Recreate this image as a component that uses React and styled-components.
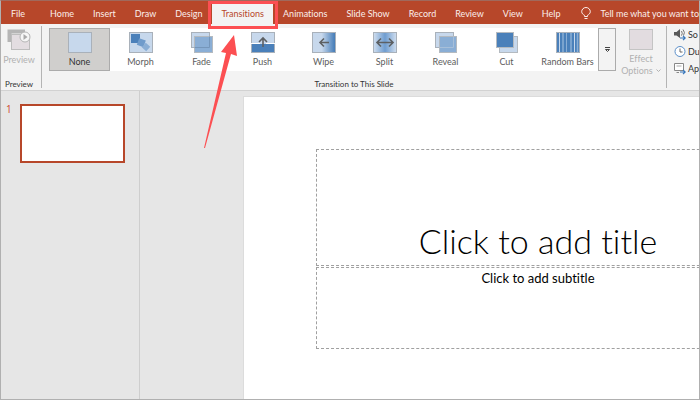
import React, { useState } from 'react'
import styled, { createGlobalStyle, css } from 'styled-components';

const GlobalStyle = createGlobalStyle`
    * {
        box-sizing: border-box;
    }
    body {
        margin: 0;
        font-family: Lato, 'Open Sans', sans-serif;
        font-variant-ligatures: none;
        color: #444;
    }
    button, input {
        font: inherit;
        font-variant-ligatures: none;
        color: inherit;
        border: 0;
        margin: 0;
        padding: 0;
        background: none;
    }
    svg {
        display: block;
        flex: none;
    }
`;

const Window = styled.div`
    height: 100vh;
    display: flex;
    flex-direction: column;
    overflow: hidden;
    background: #e6e6e6;
    border: 1px solid #b0b0b0;
    border-top-color: #a0695c;
`;

const TabBar = styled.nav`
    display: flex;
    flex: none;
    height: 23px;
    padding-top: 3px;
    background: #b7472a;
    color: #fbeeea;
    font-size: 9px;
`;

const Tab = styled.button`
    position: relative;
    flex: none;
    padding: 0 9px 2px 10px;
    white-space: nowrap;
    ${({ $wide }) => $wide && css`
        margin-right: 6px;
    `}
    ${({ $active }) => $active && css`
        background: #f3f3f3;
        color: #b7472a;
    `}
`;

const TellMe = styled.label`
    display: flex;
    flex: 1;
    min-width: 0;
    align-items: center;
    gap: 9px;
    padding: 0 0 2px 12px;
`;

const TellMeInput = styled.input`
    flex: 1;
    min-width: 0;
    outline: none;
    &::placeholder {
        color: #fbeeea;
        opacity: 1;
    }
`;

const Highlight = styled.span`
    position: absolute;
    inset: -3px -5px -5px -4px;
    border: 3px solid #fc4f52;
    z-index: 2;
`;

const Arrow = styled.svg`
    position: absolute;
    top: 30px;
    left: -9px;
    z-index: 2;
    fill: #fc4f52;
    pointer-events: none;
`;

const Ribbon = styled.div`
    display: flex;
    flex: none;
    height: 67px;
    background: #f3f3f3;
    border-bottom: 1px solid #d2d2d2;
    overflow: hidden;
    font-size: 9px;
`;

const Group = styled.section`
    display: flex;
    flex: none;
    flex-direction: column;
    justify-content: space-between;
    padding-top: 4px;
`;

const PreviewGroup = styled(Group)`
    padding-right: 4px;
`;

const GroupRow = styled.div`
    display: flex;
`;

const GroupName = styled.div`
    font-size: 8px;
    line-height: 12px;
    text-align: center;
    color: #333;
`;

const Divider = styled.div`
    flex: none;
    width: 1px;
    margin: 2px 0;
    background: #b4b4b4;
`;

const BigButton = styled.button`
    display: flex;
    flex-direction: column;
    align-items: center;
    width: ${({ $width }) => $width}px;
    line-height: 12px;
    white-space: nowrap;
    color: #b1b1b1;
    > svg {
        margin: 1px 0 3px;
    }
`;

const Chevron = styled.span`
    display: flex;
    align-items: center;
    gap: 3px;
`;

const Gallery = styled.div`
    display: flex;
    height: 43px;
    margin-left: 7px;
    background: #fff;
`;

const Effect = styled.button`
    display: flex;
    flex-direction: column;
    align-items: center;
    gap: 3px;
    width: 61px;
    padding-top: 4px;
    line-height: 12px;
    color: #5c5c5c;
    white-space: nowrap;
    ${({ $selected }) => $selected && css`
        background: #d0cfcd;
        color: #333;
        box-shadow: inset 0 0 0 1px #ababab;
    `}
`;

const More = styled.button`
    display: flex;
    align-items: center;
    justify-content: center;
    width: 18px;
    background: #f3f3f3;
    border: 1px solid #ababab;
`;

const Timing = styled.div`
    display: flex;
    flex: 1;
    flex-direction: column;
    gap: 2px;
    min-width: 0;
    padding: 3px 0 0 7px;
`;

const TimingItem = styled.button`
    display: flex;
    align-items: center;
    gap: 2px;
    height: 15px;
    white-space: nowrap;
    color: #333;
`;

const Main = styled.div`
    display: flex;
    flex: 1;
    min-height: 0;
`;

const Thumbnails = styled.aside`
    display: flex;
    align-items: flex-start;
    flex: none;
    width: 139px;
    padding: 13px 14px 0 5px;
    gap: 8px;
    border-right: 1px solid #cecece;
`;

const SlideNumber = styled.span`
    width: 6px;
    font-family: 'Open Sans', sans-serif;
    font-size: 10px;
    line-height: 10px;
    color: #d0482c;
`;

const Thumb = styled.button`
    width: 106px;
    aspect-ratio: 16 / 9;
    background: #fff;
    border: 2px solid #b7472a;
`;

const Workspace = styled.main`
    flex: 1;
    min-width: 0;
    padding: 6px 0 0 104px;
    overflow: hidden;
`;

const Slide = styled.div`
    display: flex;
    flex-direction: column;
    gap: 1px;
    width: 588px;
    aspect-ratio: 16 / 9;
    padding: 52px 72px;
    background: #fff;
    outline: 1px solid #dcdcdc;
    color: #000;
    text-align: center;
`;

const TitleBox = styled.div`
    display: flex;
    align-items: flex-end;
    justify-content: center;
    height: 117px;
    border: 1px dashed #a0a0a0;
`;

const SubtitleBox = styled(TitleBox)`
    align-items: flex-start;
    height: 82px;
`;

const Title = styled.h1`
    margin: 0 0 4px;
    font-size: 34px;
    font-weight: 300;
    line-height: 40px;
`;

const Subtitle = styled.p`
    margin: 2px 0 0;
    font-size: 13px;
    line-height: 16px;
`;

const light = '#c7d8ec'
const mid = '#8aaed5'
const dark = '#4a80ba'

const Frame = ({ fill = light }) => (
    <rect x="0.5" y="0.5" width="23" height="20" fill={fill} stroke="#a9b1ba" />
)

const gradient = (id, stops) => (
    <linearGradient id={id}>
        {stops.map(([offset, color]) => <stop key={offset} offset={offset} stopColor={color} />)}
    </linearGradient>
)

const drawings = {
    None: <Frame />,
    Morph: (
        <>
            <Frame />
            <rect x="2" y="2" width="9" height="9" fill={dark} />
            <rect x="9" y="7" width="7" height="7" fill="#6f9bcb" transform="rotate(20 12 10)" />
            <rect x="14" y="12" width="6" height="6" fill={mid} transform="rotate(42 17 15)" />
        </>
    ),
    Fade: (
        <>
            <rect x="1.5" y="0.5" width="18" height="15" fill={light} stroke="#a9b1ba" />
            <rect x="4.5" y="4.5" width="18" height="16" fill={mid} stroke="#b4bac0" />
            <path d="M4.5 15.5h15v-11" fill="none" stroke="#7596ba" />
        </>
    ),
    Push: (
        <>
            <Frame />
            <path d="M1 12h22v8H1z" fill={dark} />
            <path d="M0 11.5h9M15 11.5h9" stroke="#fff" />
            <path d="M12 15V6M8 10l4-4 4 4" fill="none" stroke="#5d6063" strokeWidth="1.6" />
        </>
    ),
    Wipe: (
        <>
            <defs>{gradient('wipe', [[0.4, light], [0.95, dark]])}</defs>
            <Frame fill="url(#wipe)" />
            <path d="M17 10.5H8M12 6.5l-4 4 4 4" fill="none" stroke="#5d6063" strokeWidth="1.6" />
        </>
    ),
    Split: (
        <>
            <defs>{gradient('split', [[0.05, light], [0.5, '#6f9dd0'], [0.95, light]])}</defs>
            <Frame fill="url(#split)" />
            <path d="M4 10.5h16M8 6.5l-4 4 4 4M16 6.5l4 4-4 4" fill="none" stroke="#5d6063" strokeWidth="1.6" />
        </>
    ),
    Reveal: (
        <>
            <rect x="1.5" y="0.5" width="18" height="15" fill={light} stroke="#a9b1ba" />
            <rect x="5.5" y="4.5" width="17" height="16" fill={mid} stroke="#b4bac0" />
            <path d="M5.5 15.5h14v-11" fill="none" stroke="#a7bfd9" />
        </>
    ),
    Cut: (
        <>
            <rect x="4.5" y="4.5" width="18" height="16" fill={light} stroke="#b4bac0" />
            <rect x="1.5" y="0.5" width="17" height="15" fill={dark} stroke="#b4bac0" />
        </>
    ),
    'Random Bars': (
        <>
            <Frame fill={dark} />
            <path d="M3.5 1v19M18.5 1v19" stroke={light} />
            <path d="M7 1v19M15 1v19M21.5 1v19" stroke={mid} strokeWidth="1.5" />
            <path d="M10.5 1v19" stroke={mid} />
        </>
    ),
}

const PreviewIcon = () => (
    <svg width="24" height="22" viewBox="0 0 24 22">
        <path d="M2.5 13V2.5H18" fill="none" stroke="#b5b5b5" strokeWidth="4" />
        <rect x="4.5" y="5.5" width="18" height="15" fill="#e3dde1" stroke="#bdbdbd" />
        <circle cx="18" cy="8" r="5" fill="#f6f6f6" stroke="#b5b5b5" />
        <path d="M16.5 5v6l4-3z" fill="#a9a9a9" />
    </svg>
)

const OptionsIcon = () => (
    <svg width="24" height="21" viewBox="0 0 24 21">
        <rect x="0.5" y="0.5" width="23" height="20" fill="#e2dce0" stroke="#c4c4c4" />
    </svg>
)

const BulbIcon = () => (
    <svg width="10" height="13" viewBox="0 0 10 13" fill="none" stroke="currentColor">
        <path d="M3.5 9.5V8.3C2 7.5 0.7 6.4 0.7 4.7a4.3 4.2 0 0 1 8.6 0C9.3 6.4 8 7.5 6.5 8.3v1.2zM3.5 11.5h3" />
    </svg>
)

const BlueArrow = () => (
    <path d="M6 10h5M9 7.8l2.2 2.2L9 12.2" fill="none" stroke="#3474ba" strokeWidth="1.2" />
)

const SoundIcon = () => (
    <svg width="12" height="13" viewBox="0 0 12 13">
        <path d="M0 4h2.5L6 1v9L2.5 7.5H0z" fill="#5a5a5a" />
        <path d="M7.5 3q1.5 2.3 0 4.6M9 1.5q2.6 3 0.5 6" fill="none" stroke="#777" />
        <BlueArrow />
    </svg>
)

const ClockIcon = () => (
    <svg width="12" height="13" viewBox="0 0 12 13" fill="none">
        <circle cx="6" cy="6.5" r="5" fill="#fff" stroke="#5b8fc9" />
        <path d="M6 3.5v3.5h2.5" stroke="#666" />
    </svg>
)

const ApplyIcon = () => (
    <svg width="12" height="13" viewBox="0 0 12 13" fill="none">
        <path d="M5 10.5H2.5M0.5 1.5h9v7h-9z" fill="#fff" stroke="#888" />
        <path d="M2.5 4h5" stroke="#aaa" />
        <BlueArrow />
    </svg>
)

const tabs = ['File', 'Home', 'Insert', 'Draw', 'Design', 'Transitions', 'Animations', 'Slide Show', 'Record', 'Review', 'View', 'Help']

const timing = [
    ['So', SoundIcon],
    ['Du', ClockIcon],
    ['Ap', ApplyIcon],
]

const App = () => {
    const [tab, setTab] = useState('Transitions')
    const [effect, setEffect] = useState('None')

    return (
        <Window>
            <GlobalStyle />
            <TabBar>
                {tabs.map(name => (
                    <Tab key={name} $active={name === tab} $wide={name === 'File'} onClick={() => setTab(name)}>
                        {name}
                        {name === 'Transitions' && (
                            <>
                                <Highlight />
                                <Arrow width="36" height="116" viewBox="0 0 36 116">
                                    <path d="M31 1L18 18l5 1L1 114h1L28 20l6 2z" />
                                </Arrow>
                            </>
                        )}
                    </Tab>
                ))}
                <TellMe>
                    <BulbIcon />
                    <TellMeInput aria-label="Tell me" placeholder="Tell me what you want to" />
                </TellMe>
            </TabBar>
            <Ribbon>
                <PreviewGroup>
                    <BigButton $width={36} disabled>
                        <PreviewIcon />
                        Preview
                    </BigButton>
                    <GroupName>Preview</GroupName>
                </PreviewGroup>
                <Divider />
                <Group>
                    <GroupRow>
                        <Gallery>
                            {Object.keys(drawings).map(name => (
                                <Effect key={name} $selected={name === effect} onClick={() => setEffect(name)}>
                                    <svg width="24" height="21" viewBox="0 0 24 21">{drawings[name]}</svg>
                                    {name}
                                </Effect>
                            ))}
                            <More aria-label="More transitions">
                                <svg width="7" height="7" viewBox="0 0 7 7" fill="none" stroke="#444">
                                    <path d="M1 1.5h5M1.5 3.5l2 2 2-2z" />
                                </svg>
                            </More>
                        </Gallery>
                        <BigButton $width={50} disabled>
                            <OptionsIcon />
                            <span>Effect</span>
                            <Chevron>
                                Options
                                <svg width="5" height="4" viewBox="0 0 5 4" fill="none" stroke="currentColor">
                                    <path d="M0.5 0.5l2 2 2-2" />
                                </svg>
                            </Chevron>
                        </BigButton>
                    </GroupRow>
                    <GroupName>Transition to This Slide</GroupName>
                </Group>
                <Divider />
                <Timing>
                    {timing.map(([label, Icon]) => (
                        <TimingItem key={label}>
                            <Icon />
                            {label}
                        </TimingItem>
                    ))}
                </Timing>
            </Ribbon>
            <Main>
                <Thumbnails>
                    <SlideNumber>1</SlideNumber>
                    <Thumb aria-label="Slide 1" />
                </Thumbnails>
                <Workspace>
                    <Slide>
                        <TitleBox>
                            <Title>Click to add title</Title>
                        </TitleBox>
                        <SubtitleBox>
                            <Subtitle>Click to add subtitle</Subtitle>
                        </SubtitleBox>
                    </Slide>
                </Workspace>
            </Main>
        </Window>
    )
}

export default App
